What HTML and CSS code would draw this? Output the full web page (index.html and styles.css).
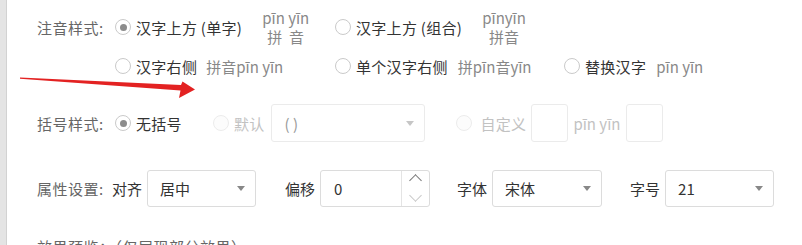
FILE: index.html
```html
<!DOCTYPE html>
<html lang="zh-CN">
<head>
<meta charset="utf-8">
<link rel="stylesheet" href="styles.css">
</head>
<body>
<div class="page">
  <div class="side"></div>
  <div class="content">
    <div class="row row1">
      <span class="label">注音样式:</span>
      <div class="grid">
        <div class="opt">
          <span class="radio checked"></span><span class="txt">汉字上方 (单字)</span>
          <span class="ruby"><span>pīn yīn</span><span>拼&nbsp; 音</span></span>
        </div>
        <div class="opt">
          <span class="radio"></span><span class="txt">汉字上方 (组合)</span>
          <span class="ruby"><span>pīnyīn</span><span>拼音</span></span>
        </div>
      </div>
    </div>
    <div class="row row2">
      <span class="label"></span>
      <div class="grid">
        <div class="opt">
          <span class="radio"></span><span class="txt">汉字右侧</span><span class="py py1">拼音pīn yīn</span>
        </div>
        <div class="opt">
          <span class="radio"></span><span class="txt">单个汉字右侧</span><span class="py">拼pīn音yīn</span>
        </div>
        <div class="opt">
          <span class="radio"></span><span class="txt">替换汉字</span><span class="py">pīn yīn</span>
        </div>
      </div>
    </div>
    <div class="row row3">
      <span class="label">括号样式:</span>
      <div class="line">
        <span class="radio checked"></span><span class="txt">无括号</span>
        <span class="radio disabled gap31"></span><span class="txt dis">默认</span>
        <span class="select sel-dis w154"><span>( )</span><span class="caret"></span></span>
        <span class="radio disabled gap31"></span><span class="txt dis t8">自定义</span>
        <span class="box m5"></span>
        <span class="dis m5">pīn yīn</span>
        <span class="box m6"></span>
      </div>
    </div>
    <div class="row row4">
      <span class="label l75">属性设置:</span>
      <div class="line">
        <span class="txt0">对齐</span>
        <span class="select w109 m5"><span>居中</span><span class="caret"></span></span>
        <span class="txt0 m29">偏移</span>
        <span class="num m5"><span class="numval">0</span><span class="spin"><span class="up"></span><span class="down"></span></span></span>
        <span class="txt0 m27">字体</span>
        <span class="select w110 m5"><span>宋体</span><span class="caret"></span></span>
        <span class="txt0 m28">字号</span>
        <span class="select w109 m5"><span>21</span><span class="caret"></span></span>
      </div>
    </div>
    <div class="row row5">
      <span class="label">效果预览：（仅展现部分效果）</span>
    </div>
  </div>
</div>
<svg class="arrow" width="802" height="245" viewBox="0 0 802 245">
  <polygon points="20,77.6 181,85 182.5,81.5 195,89.5 179,98 180.5,90.5 20,78.8" fill="#e32222"/>
</svg>
</body>
</html>
```
FILE: styles.css
```css
html, body {
  margin: 0;
  padding: 0;
  background: #fff;
}
body {
  font-family: "Noto Sans CJK SC", "Noto Sans", sans-serif;
  font-size: 15px;
  color: #333;
  width: 802px;
  height: 245px;
  overflow: hidden;
  position: relative;
}
.page {
  display: flex;
  height: 245px;
}
.side {
  width: 6px;
  flex: none;
  background: #e4e4e4;
  border-right: 1px solid #d2d2d2;
}
.content {
  padding-left: 30px;
  flex: 1;
}
.row {
  display: flex;
  align-items: center;
}
.label {
  width: 78px;
  flex: none;
  color: #666;
  white-space: nowrap;
  letter-spacing: 0.5px;
}
.l75 { width: 75px; }
.row1 { padding-top: 8px; height: 38px; }
.row2 { margin-top: 6px; height: 28px; }
.row3 { margin-top: 24px; height: 38px; }
.row4 { margin-top: 28px; height: 37px; }
.row5 { margin-top: 29px; height: 20px; }
.grid {
  display: grid;
  grid-template-columns: 220px 229px auto;
  align-items: center;
}
.opt {
  display: flex;
  align-items: center;
  white-space: nowrap;
}
.radio {
  width: 14px;
  height: 14px;
  border: 1px solid #cacaca;
  border-radius: 50%;
  background: #fff;
  flex: none;
  display: flex;
  align-items: center;
  justify-content: center;
}
.radio.checked::after {
  content: "";
  width: 7px;
  height: 7px;
  border-radius: 50%;
  background: #8c8c8c;
}
.radio.disabled {
  border-color: #ececec;
  background: #fcfcfc;
}
.txt {
  margin-left: 5px;
  color: #333;
  white-space: nowrap;
  letter-spacing: 0.3px;
}
.txt0 { color: #333; white-space: nowrap; }
.ruby {
  display: flex;
  flex-direction: column;
  align-items: center;
  margin-left: 20px;
  color: #888;
  line-height: 19px;
}
.py {
  margin-left: 10px;
  color: #888;
}
.py1 { margin-left: 9px; }
.line {
  display: flex;
  align-items: center;
  white-space: nowrap;
}
.dis { color: #c2c2c2; }
.t8 { margin-left: 9px; }
.gap31 { margin-left: 31px; }
.m5 { margin-left: 5px; }
.m6 { margin-left: 6px; }
.m27 { margin-left: 27px; }
.m28 { margin-left: 28px; }
.m29 { margin-left: 29px; }
.select {
  box-sizing: border-box;
  height: 37px;
  border: 1px solid #dcdcdc;
  border-radius: 3px;
  display: flex;
  align-items: center;
  justify-content: space-between;
  padding: 0 10px 0 12px;
  color: #333;
  background: #fff;
}
.sel-dis {
  margin-left: 6px;
  border-color: #ebebeb;
  color: #999;
  height: 38px;
  padding-left: 13px;
}
.sel-dis .caret { border-top-color: #c6c6c6; }
.w154 { width: 154px; }
.w109 { width: 109px; }
.w110 { width: 110px; }
.caret {
  width: 0;
  height: 0;
  border-left: 4px solid transparent;
  border-right: 4px solid transparent;
  border-top: 5px solid #888;
}
.box {
  box-sizing: border-box;
  width: 37px;
  height: 38px;
  border: 1px solid #ebebeb;
  border-radius: 3px;
  background: #fff;
}
.num {
  box-sizing: border-box;
  width: 110px;
  height: 37px;
  border: 1px solid #dcdcdc;
  border-radius: 3px;
  display: flex;
  align-items: stretch;
}
.numval {
  flex: 1;
  padding-left: 13px;
  display: flex;
  align-items: center;
}
.spin {
  width: 27px;
  border-left: 1px solid #e4e4e4;
  display: flex;
  flex-direction: column;
  align-items: center;
  justify-content: center;
  gap: 6px;
}
.up, .down {
  width: 8px;
  height: 8px;
  border-left: 1.3px solid #777;
  border-top: 1.3px solid #777;
  transform: rotate(45deg);
}
.up { margin-top: 5px; }
.down {
  border-color: #c8c8c8;
  transform: rotate(225deg);
  margin-bottom: 6px;
}
.arrow {
  position: absolute;
  left: 0;
  top: 0;
  pointer-events: none;
}
```
